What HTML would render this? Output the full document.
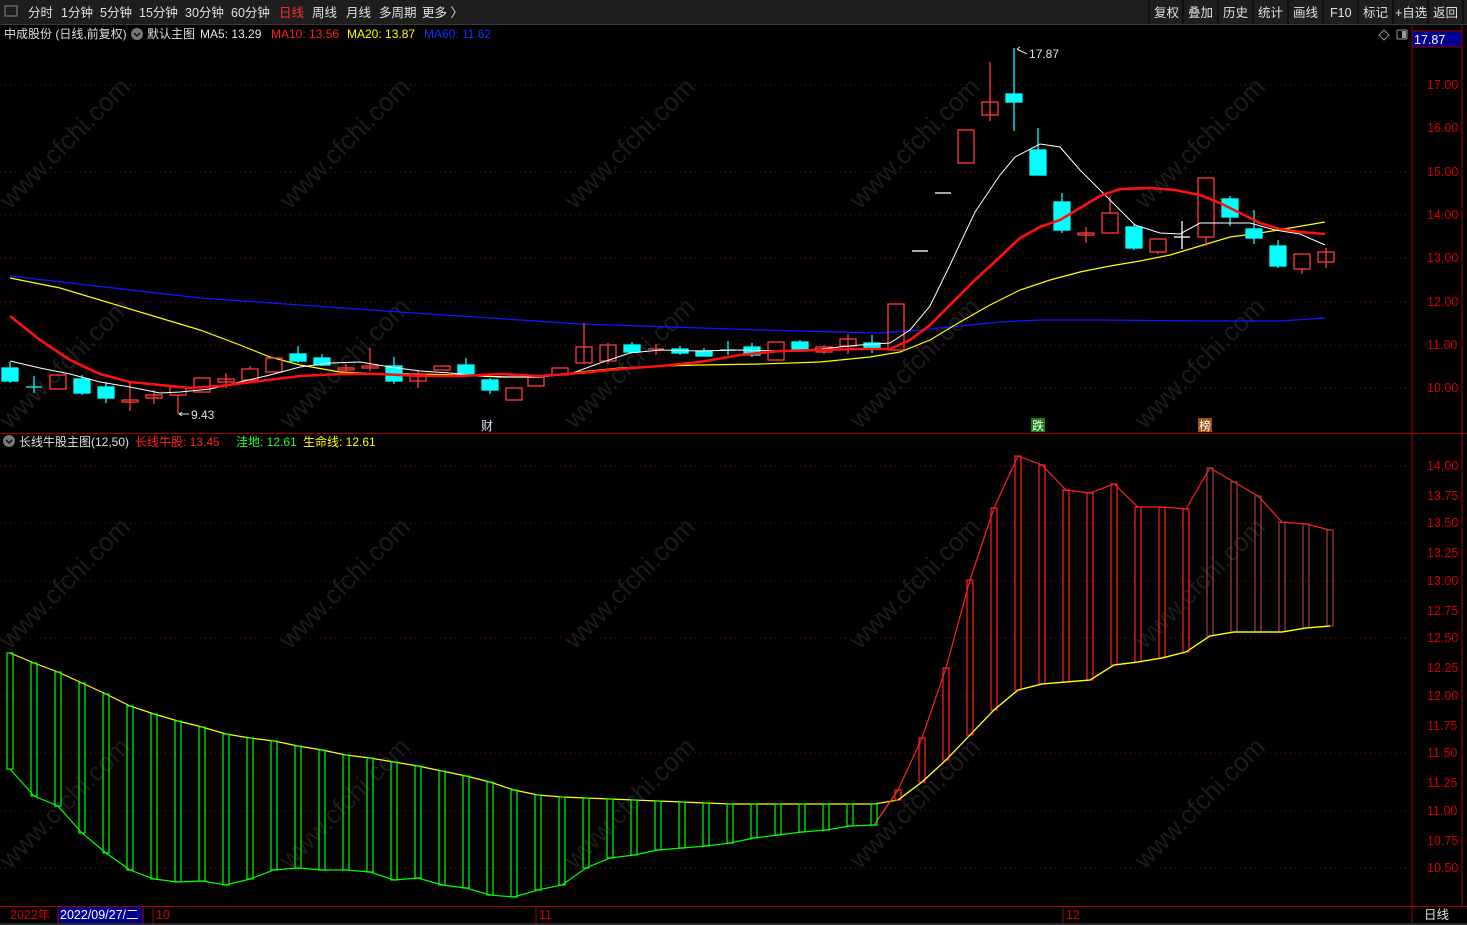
<!DOCTYPE html><html><head><meta charset="utf-8"><style>
body{margin:0;background:#000;width:1467px;height:925px;overflow:hidden;font-family:"Liberation Sans","Noto Sans CJK SC",sans-serif;}
svg text{font-family:"Liberation Sans","Noto Sans CJK SC",sans-serif;}
</style></head><body>
<svg width="1467" height="925" xmlns="http://www.w3.org/2000/svg" style="position:absolute;left:0;top:0">
<rect width="1467" height="925" fill="#000"/>
<!-- toolbar -->
<rect x="0" y="0" width="1467" height="24" fill="#1e1e1e"/>
<line x1="0" y1="24.5" x2="1467" y2="24.5" stroke="#3a3a3a"/>
<rect x="5" y="6" width="12" height="10" fill="none" stroke="#888" stroke-width="1"/>
<g font-size="12.5" fill="#e0e0e0">
<text x="28" y="17">分时</text><text x="61" y="17">1分钟</text><text x="100" y="17">5分钟</text><text x="139" y="17">15分钟</text><text x="185" y="17">30分钟</text><text x="231" y="17">60分钟</text><text x="279" y="17" fill="#ff3030">日线</text><text x="312" y="17">周线</text><text x="346" y="17">月线</text><text x="379" y="17">多周期</text><text x="422" y="17">更多 〉</text>
</g>
<g stroke="#000" stroke-width="1"><line x1="1149" y1="0" x2="1149" y2="24"/><line x1="1183" y1="0" x2="1183" y2="24"/><line x1="1218" y1="0" x2="1218" y2="24"/><line x1="1253" y1="0" x2="1253" y2="24"/><line x1="1288" y1="0" x2="1288" y2="24"/><line x1="1323" y1="0" x2="1323" y2="24"/><line x1="1358" y1="0" x2="1358" y2="24"/><line x1="1393" y1="0" x2="1393" y2="24"/><line x1="1428" y1="0" x2="1428" y2="24"/><line x1="1463" y1="0" x2="1463" y2="24"/></g>
<g font-size="12.5" fill="#e0e0e0"><text x="1154" y="17">复权</text><text x="1188" y="17">叠加</text><text x="1223" y="17">历史</text><text x="1258" y="17">统计</text><text x="1293" y="17">画线</text><text x="1330" y="17">F10</text><text x="1363" y="17">标记</text><text x="1395" y="17">+自选</text><text x="1433" y="17">返回</text></g>
<!-- main header -->
<g font-size="12">
<text x="4" y="38" fill="#e0e0e0">中成股份 (日线,前复权)</text>
<circle cx="137" cy="34" r="6" fill="#777"/><path d="M134 33l3 3 3-3" stroke="#111" fill="none" stroke-width="1.5"/>
<text x="147" y="38" fill="#e0e0e0">默认主图</text>
<text x="200" y="38" fill="#e8e8e8">MA5: 13.29</text>
<text x="271" y="38" fill="#ff2020">MA10: 13.56</text>
<text x="347" y="38" fill="#ffff00">MA20: 13.87</text>
<text x="424" y="38" fill="#1030ff">MA60: 11.62</text>
</g>
<path d="M1384 30l5 5-5 5-5-5z" fill="none" stroke="#999"/>
<rect x="1397" y="30" width="10" height="9" rx="1" fill="none" stroke="#999"/><rect x="1402" y="31" width="4" height="7" fill="#999"/>
<!-- axes frames -->
<line x1="1412" y1="25" x2="1412" y2="925" stroke="#a00000"/>
<line x1="1462" y1="25" x2="1462" y2="906" stroke="#a00000"/>
<line x1="0" y1="433.5" x2="1467" y2="433.5" stroke="#a00000"/>
<line x1="0" y1="906.5" x2="1467" y2="906.5" stroke="#a00000"/>
<rect x="1412" y="31" width="50" height="16" fill="#000090" stroke="#a00000"/>
<text x="1414" y="44" font-size="12.5" fill="#fff">17.87</text>
<!-- grids main -->
<g stroke="#900000" stroke-dasharray="1,4">
<line x1="0" y1="85" x2="1408" y2="85"/><line x1="0" y1="128" x2="1408" y2="128"/><line x1="0" y1="172" x2="1408" y2="172"/><line x1="0" y1="215" x2="1408" y2="215"/><line x1="0" y1="258" x2="1408" y2="258"/><line x1="0" y1="302" x2="1408" y2="302"/><line x1="0" y1="345" x2="1408" y2="345"/><line x1="0" y1="388" x2="1408" y2="388"/>
<line x1="0" y1="466" x2="1408" y2="466"/><line x1="0" y1="523" x2="1408" y2="523"/><line x1="0" y1="581" x2="1408" y2="581"/><line x1="0" y1="638" x2="1408" y2="638"/><line x1="0" y1="696" x2="1408" y2="696"/><line x1="0" y1="753" x2="1408" y2="753"/><line x1="0" y1="811" x2="1408" y2="811"/><line x1="0" y1="868" x2="1408" y2="868"/>
</g>
<g fill="#d00000" font-size="12.5">
<text x="1427" y="89">17.00</text><text x="1427" y="132">16.00</text><text x="1427" y="176">15.00</text><text x="1427" y="219">14.00</text><text x="1427" y="262">13.00</text><text x="1427" y="306">12.00</text><text x="1427" y="349">11.00</text><text x="1427" y="392">10.00</text>
<text x="1427" y="470">14.00</text><text x="1427" y="500">13.75</text><text x="1427" y="527">13.50</text><text x="1427" y="557">13.25</text><text x="1427" y="585">13.00</text><text x="1427" y="615">12.75</text><text x="1427" y="642">12.50</text><text x="1427" y="672">12.25</text><text x="1427" y="700">12.00</text><text x="1427" y="730">11.75</text><text x="1427" y="757">11.50</text><text x="1427" y="787">11.25</text><text x="1427" y="815">11.00</text><text x="1427" y="845">10.75</text><text x="1427" y="872">10.50</text>
</g>
<!-- watermarks -->
<g fill="#1c1c1c" font-size="26">
<text transform="translate(10,210) rotate(-45)">www.cfchi.com</text>
<text transform="translate(290,210) rotate(-45)">www.cfchi.com</text>
<text transform="translate(575,210) rotate(-45)">www.cfchi.com</text>
<text transform="translate(860,210) rotate(-45)">www.cfchi.com</text>
<text transform="translate(1145,210) rotate(-45)">www.cfchi.com</text>
<text transform="translate(10,430) rotate(-45)">www.cfchi.com</text>
<text transform="translate(290,430) rotate(-45)">www.cfchi.com</text>
<text transform="translate(575,430) rotate(-45)">www.cfchi.com</text>
<text transform="translate(860,430) rotate(-45)">www.cfchi.com</text>
<text transform="translate(1145,430) rotate(-45)">www.cfchi.com</text>
<text transform="translate(10,650) rotate(-45)">www.cfchi.com</text>
<text transform="translate(290,650) rotate(-45)">www.cfchi.com</text>
<text transform="translate(575,650) rotate(-45)">www.cfchi.com</text>
<text transform="translate(860,650) rotate(-45)">www.cfchi.com</text>
<text transform="translate(1145,650) rotate(-45)">www.cfchi.com</text>
<text transform="translate(10,870) rotate(-45)">www.cfchi.com</text>
<text transform="translate(290,870) rotate(-45)">www.cfchi.com</text>
<text transform="translate(575,870) rotate(-45)">www.cfchi.com</text>
<text transform="translate(860,870) rotate(-45)">www.cfchi.com</text>
<text transform="translate(1145,870) rotate(-45)">www.cfchi.com</text>
</g>
<!-- MA lines -->
<polyline fill="none" stroke="#1414ff" stroke-width="1.3" points="10,276 200,298 400,312 580,324 760,330 880,333 920,330 960,326 1000,322 1040,320 1100,320 1200,321 1280,321 1325,318"/>
<polyline fill="none" stroke="#ffff00" stroke-width="1.2" points="10,278 60,288 100,300 150,315 200,330 240,345 270,357 300,365 340,372 380,374 420,374 460,375 500,377 540,377 580,372 620,368 660,366 700,365 760,364 820,362 870,357 900,352 930,340 960,322 990,305 1020,290 1050,280 1080,272 1110,266 1140,261 1170,255 1200,246 1230,237 1260,233 1290,228 1325,222"/>
<!-- candles -->
<g stroke-width="1.3">
<g stroke="#00ffff" fill="#00ffff">
<line x1="10" y1="362" x2="10" y2="383"/><rect x="2" y="368" width="16" height="13"/>
<line x1="34" y1="376" x2="34" y2="393"/><line x1="26" y1="387" x2="42" y2="387"/>
<line x1="82" y1="375" x2="82" y2="395"/><rect x="74" y="379" width="16" height="14"/>
<line x1="106" y1="382" x2="106" y2="403"/><rect x="98" y="387" width="16" height="11"/>
<line x1="298" y1="346" x2="298" y2="363"/><rect x="290" y="354" width="16" height="7"/>
<line x1="322" y1="354" x2="322" y2="366"/><rect x="314" y="358" width="16" height="7"/>
<line x1="394" y1="357" x2="394" y2="384"/><rect x="386" y="366" width="16" height="15"/>
<line x1="466" y1="358" x2="466" y2="376"/><rect x="458" y="365" width="16" height="10"/>
<line x1="490" y1="378" x2="490" y2="394"/><rect x="482" y="380" width="16" height="10"/>
<line x1="632" y1="342" x2="632" y2="352"/><rect x="624" y="345" width="16" height="7"/>
<line x1="680" y1="346" x2="680" y2="355"/><rect x="672" y="349" width="16" height="4"/>
<line x1="704" y1="348" x2="704" y2="356"/><rect x="696" y="351" width="16" height="5"/>
<line x1="728" y1="341" x2="728" y2="355"/><line x1="720" y1="350" x2="736" y2="350"/>
<line x1="752" y1="343" x2="752" y2="357"/><rect x="744" y="347" width="16" height="8"/>
<line x1="800" y1="340" x2="800" y2="352"/><rect x="792" y="342" width="16" height="9"/>
<line x1="872" y1="335" x2="872" y2="353"/><rect x="864" y="343" width="16" height="6"/>
<line x1="1014" y1="48" x2="1014" y2="131"/><rect x="1006" y="94" width="16" height="8"/>
<line x1="1038" y1="128" x2="1038" y2="175"/><rect x="1030" y="150" width="16" height="25"/>
<line x1="1062" y1="193" x2="1062" y2="233"/><rect x="1054" y="202" width="16" height="28"/>
<line x1="1134" y1="224" x2="1134" y2="250"/><rect x="1126" y="227" width="16" height="21"/>
<line x1="1230" y1="196" x2="1230" y2="226"/><rect x="1222" y="199" width="16" height="18"/>
<line x1="1254" y1="210" x2="1254" y2="244"/><rect x="1246" y="229" width="16" height="9"/>
<line x1="1278" y1="240" x2="1278" y2="268"/><rect x="1270" y="246" width="16" height="20"/>
</g>
<g stroke="#ff3c3c" fill="none">
<rect x="50" y="375" width="16" height="14"/>
<line x1="130" y1="383" x2="130" y2="411"/><rect x="122" y="400" width="16" height="2"/>
<line x1="154" y1="390" x2="154" y2="404"/><rect x="146" y="395" width="16" height="3"/>
<line x1="178" y1="395" x2="178" y2="414"/><rect x="170" y="387" width="16" height="8"/>
<rect x="194" y="378" width="16" height="14"/>
<line x1="226" y1="373" x2="226" y2="388"/><rect x="218" y="379" width="16" height="3"/>
<line x1="250" y1="366" x2="250" y2="369"/><rect x="242" y="369" width="16" height="11"/>
<rect x="266" y="358" width="16" height="14"/>
<line x1="346" y1="364" x2="346" y2="372"/><rect x="338" y="368" width="16" height="2"/>
<line x1="370" y1="348" x2="370" y2="371"/><rect x="362" y="366" width="16" height="2"/>
<line x1="418" y1="370" x2="418" y2="388"/><rect x="410" y="374" width="16" height="7"/>
<rect x="434" y="366" width="16" height="4"/>
<rect x="506" y="388" width="16" height="12"/>
<rect x="528" y="377" width="16" height="9"/>
<rect x="552" y="368" width="16" height="7"/>
<line x1="584" y1="323" x2="584" y2="363"/><rect x="576" y="347" width="16" height="16"/>
<line x1="608" y1="343" x2="608" y2="364"/><rect x="600" y="345" width="16" height="16"/>
<line x1="656" y1="344" x2="656" y2="355"/><line x1="648" y1="349" x2="664" y2="349"/>
<rect x="768" y="342" width="16" height="18"/>
<line x1="824" y1="345" x2="824" y2="354"/><rect x="816" y="347" width="16" height="5"/>
<line x1="848" y1="334" x2="848" y2="354"/><rect x="840" y="339" width="16" height="7"/>
<rect x="888" y="304" width="16" height="46"/>
<rect x="958" y="130" width="16" height="33"/>
<line x1="990" y1="62" x2="990" y2="121"/><rect x="982" y="102" width="16" height="13"/>
<line x1="1086" y1="227" x2="1086" y2="243"/><rect x="1078" y="233" width="16" height="2"/>
<line x1="1110" y1="197" x2="1110" y2="213"/><rect x="1102" y="213" width="16" height="20"/>
<line x1="1158" y1="252" x2="1158" y2="254"/><rect x="1150" y="239" width="16" height="13"/>
<line x1="1206" y1="237" x2="1206" y2="246"/><rect x="1198" y="178" width="16" height="59"/>
<line x1="1302" y1="269" x2="1302" y2="274"/><rect x="1294" y="254" width="16" height="15"/>
<line x1="1326" y1="248" x2="1326" y2="268"/><rect x="1318" y="252" width="16" height="10"/>
</g>
<g stroke="#fff">
<line x1="912" y1="251" x2="928" y2="251"/><line x1="935" y1="193" x2="951" y2="193"/>
<line x1="1182" y1="221" x2="1182" y2="249"/><line x1="1174" y1="237" x2="1190" y2="237"/>
</g>
</g>
<polyline fill="none" stroke="#ffffff" stroke-width="1" points="10,361 40,368 70,374 100,382 130,387 160,393 180,392 210,389 240,382 270,375 300,367 330,363 360,362 390,367 420,371 450,373 480,376 510,377 540,377 570,374 600,363 630,353 660,350 700,351 740,350 780,351 820,349 860,345 890,343 910,330 930,306 950,265 975,212 1000,175 1015,157 1040,144 1060,147 1080,170 1110,200 1135,225 1160,233 1180,234 1200,223 1230,223 1250,223 1275,230 1300,234 1325,245"/>
<polyline fill="none" stroke="#ff1010" stroke-width="2.6" points="10,316 40,340 70,360 100,374 130,382 160,385 190,388 220,386 260,381 300,376 340,374 380,374 420,376 460,376 500,374 540,376 580,373 620,369 660,366 700,362 740,355 780,351 820,350 860,349 890,349 910,340 930,325 950,305 975,280 1000,257 1020,238 1040,227 1060,220 1080,208 1100,196 1120,189 1150,188 1175,190 1200,195 1220,203 1240,213 1260,223 1280,229 1300,232 1325,234"/>
<g font-size="12" fill="#e0e0e0"><text x="1029" y="58">17.87</text><text x="191" y="419">9.43</text></g>
<path d="M1027 54l-10-5M1017 49l3-2M1017 49l3 2M189 414h-10M179 414l3-2M179 414l3 2" stroke="#ddd" fill="none"/>
<text x="481" y="430" font-size="12" fill="#e0e0ff">财</text>
<rect x="1031" y="418" width="14" height="14" fill="#108010"/><text x="1032" y="430" font-size="12" fill="#fff">跌</text>
<rect x="1198" y="418" width="14" height="14" fill="#a05010"/><text x="1199" y="430" font-size="12" fill="#fff">榜</text>
<!-- lower header -->
<circle cx="9" cy="441" r="6" fill="#777"/><path d="M6 440l3 3 3-3" stroke="#111" fill="none" stroke-width="1.5"/>
<g font-size="12"><text x="19" y="446" fill="#e0e0e0">长线牛股主图(12,50)</text><text x="135" y="446" fill="#ff2020">长线牛股: 13.45</text><text x="236" y="446" fill="#20ff20">洼地: 12.61</text><text x="303" y="446" fill="#ffff00">生命线: 12.61</text></g>
<!-- lower bars -->
<polyline fill="none" stroke="#ffff00" stroke-width="1.2" points="10,653 34,663 58,672 82,683 106,694 130,706 154,714 178,721 202,727 226,734 250,738 274,741 298,746 322,750 346,755 370,758 394,762 418,766 442,771 466,776 490,782 514,790 538,795 562,797 586,798 610,799 634,800 658,801 682,802 706,803 730,804 754,804 778,804 802,804 826,804 850,804 874,804 898,800 922,782 946,760 970,735 994,710 1018,690 1042,684 1066,682 1090,680 1114,665 1138,662 1162,658 1186,652 1210,636 1234,632 1258,632 1282,632 1306,628 1330,626"/>
<polyline fill="none" stroke="#00ff00" stroke-width="1.2" points="10,769 34,796 58,806 82,833 106,853 130,870 154,879 178,882 202,881 226,885 250,879 274,870 298,868 322,870 346,870 370,872 394,880 418,878 442,885 466,888 490,895 514,897 538,890 562,885 586,868 610,858 634,855 658,850 682,848 706,846 730,843 754,838 778,835 802,832 826,830 850,826 874,825 898,790"/>
<polyline fill="none" stroke="#ff2020" stroke-width="1.2" points="874,825 898,790 922,738 946,668 970,580 994,508 1018,456 1042,465 1066,490 1090,493 1114,484 1138,507 1162,507 1186,509 1210,468 1234,482 1258,496 1282,522 1306,524 1330,530"/>
<g fill="none" stroke="#00ff00" stroke-width="1.2">
<rect x="7" y="653" width="6" height="116"/><rect x="31" y="663" width="6" height="133"/><rect x="55" y="672" width="6" height="134"/><rect x="79" y="683" width="6" height="150"/><rect x="103" y="694" width="6" height="159"/><rect x="127" y="706" width="6" height="164"/><rect x="151" y="714" width="6" height="165"/><rect x="175" y="721" width="6" height="161"/><rect x="199" y="727" width="6" height="154"/><rect x="223" y="734" width="6" height="151"/><rect x="247" y="738" width="6" height="141"/><rect x="271" y="741" width="6" height="129"/><rect x="295" y="746" width="6" height="122"/><rect x="319" y="750" width="6" height="120"/><rect x="343" y="755" width="6" height="115"/><rect x="367" y="758" width="6" height="114"/><rect x="391" y="762" width="6" height="118"/><rect x="415" y="766" width="6" height="112"/><rect x="439" y="771" width="6" height="114"/><rect x="463" y="776" width="6" height="112"/><rect x="487" y="782" width="6" height="113"/><rect x="511" y="790" width="6" height="107"/><rect x="535" y="795" width="6" height="95"/><rect x="559" y="797" width="6" height="88"/><rect x="583" y="798" width="6" height="70"/><rect x="607" y="799" width="6" height="59"/><rect x="631" y="800" width="6" height="55"/><rect x="655" y="801" width="6" height="49"/><rect x="679" y="802" width="6" height="46"/><rect x="703" y="803" width="6" height="43"/><rect x="727" y="804" width="6" height="39"/><rect x="751" y="804" width="6" height="34"/><rect x="775" y="804" width="6" height="31"/><rect x="799" y="804" width="6" height="28"/><rect x="823" y="804" width="6" height="26"/><rect x="847" y="804" width="6" height="22"/><rect x="871" y="804" width="6" height="21"/>
</g>
<g fill="none" stroke="#ff2020" stroke-width="1.2">
<rect x="895" y="790" width="6" height="10"/><rect x="919" y="738" width="6" height="44"/><rect x="943" y="668" width="6" height="92"/><rect x="967" y="580" width="6" height="155"/><rect x="991" y="508" width="6" height="202"/><rect x="1015" y="456" width="6" height="234"/><rect x="1039" y="465" width="6" height="219"/><rect x="1063" y="490" width="6" height="192"/><rect x="1087" y="493" width="6" height="187"/><rect x="1111" y="484" width="6" height="181"/><rect x="1135" y="507" width="6" height="155"/><rect x="1159" y="507" width="6" height="151"/><rect x="1183" y="509" width="6" height="143"/>
</g>
<g fill="none" stroke="#a04040" stroke-width="1.2">
<rect x="1207" y="468" width="6" height="168"/><rect x="1231" y="482" width="6" height="150"/><rect x="1255" y="496" width="6" height="136"/><rect x="1279" y="522" width="6" height="110"/><rect x="1303" y="524" width="6" height="104"/><rect x="1327" y="530" width="6" height="96"/>
</g>
<polyline fill="none" stroke="#ffff00" stroke-width="1.2" points="898,800 922,782 946,760 970,735 994,710 1018,690 1042,684 1066,682 1090,680 1114,665 1138,662 1162,658 1186,652 1210,636 1234,632 1258,632 1282,632 1306,628 1330,626"/>
<!-- bottom axis -->
<g font-size="12.5"><text x="10" y="919" fill="#d00000">2022年</text></g>
<rect x="58" y="907" width="85" height="16" fill="#000090"/>
<line x1="58" y1="907" x2="58" y2="923" stroke="#a00000"/><line x1="143" y1="907" x2="143" y2="923" stroke="#a00000"/>
<text x="60" y="919" font-size="12.5" fill="#fff">2022/09/27/二</text>
<line x1="153" y1="907" x2="153" y2="923" stroke="#a00000"/><text x="156" y="919" font-size="12.5" fill="#d00000">10</text>
<line x1="536" y1="907" x2="536" y2="923" stroke="#a00000"/><text x="539" y="919" font-size="12.5" fill="#d00000">11</text>
<line x1="1063" y1="907" x2="1063" y2="923" stroke="#a00000"/><text x="1066" y="919" font-size="12.5" fill="#d00000">12</text>
<text x="1424" y="919" font-size="12.5" fill="#e0e0e0">日线</text>
<rect x="0" y="923" width="1467" height="2" fill="#2a2a2a"/>
</svg>
</body></html>
